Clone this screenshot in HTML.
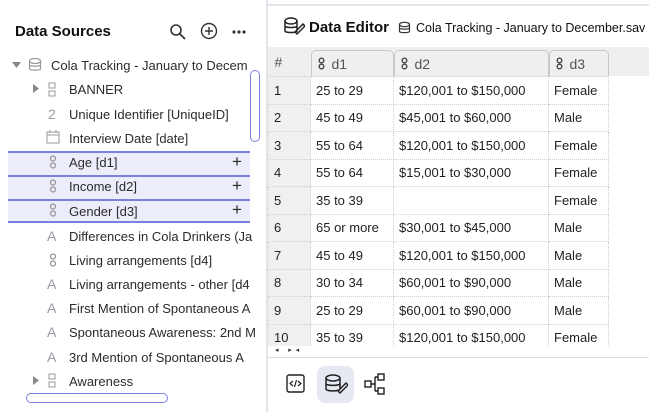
<!DOCTYPE html>
<html><head><style>
*{margin:0;padding:0;box-sizing:border-box}
html,body{background:#fff}
body{width:649px;height:412px;overflow:hidden;font-family:"Liberation Sans",sans-serif;color:#222;position:relative}
.abs{position:absolute}
.left{left:0;top:0;width:268px;height:412px;border-right:2px solid #e2e4ea;background:#fff}
.t{position:absolute;font-size:13px;white-space:nowrap;color:#2b2b2b}
.row{position:absolute;left:8px;width:242px;height:24px;background:#ecedfa;border-top:2px solid #7b7fe0}
.ic{position:absolute;color:#9a9ca4;font-size:14px}
.grid{position:absolute;left:268px;top:47px}
table{border-collapse:collapse;font-size:13px}
td{height:27.5px;padding:0 5px;border:1px dotted #cfcfcf;white-space:nowrap;color:#222}
td.n{background:#f0f0f0;width:42px}
th{height:29px;background:#efefef;font-weight:normal;text-align:left;padding:0;color:#555;font-size:14px}
th .b{height:26px;margin-top:3px;border:1.5px solid #c8c8c8;border-bottom:none;border-radius:5px 5px 0 0;padding:3px 6px;display:flex;align-items:center;gap:7px}
.dot{display:inline-block;width:7px;height:13px;vertical-align:middle}
</style></head><body>
<div class="abs" style="left:0;top:0;width:649px;height:6px;border-bottom:2px solid #e2e4ea"></div>
<div class="abs left">
<div class="t" style="left:15px;top:23px;font-size:15px;font-weight:bold;color:#111">Data Sources</div>
<svg class="abs" style="left:169px;top:23px" width="18" height="18"><circle cx="7" cy="7" r="5" fill="none" stroke="#333" stroke-width="1.6"/><line x1="11" y1="11" x2="16" y2="16" stroke="#333" stroke-width="1.8"/></svg>
<svg class="abs" style="left:200px;top:22px" width="18" height="18"><circle cx="9" cy="9" r="7.5" fill="none" stroke="#333" stroke-width="1.4"/><path d="M9 5v8M5 9h8" stroke="#333" stroke-width="1.4"/></svg>
<svg class="abs" style="left:232px;top:30px" width="14" height="4"><circle cx="2" cy="2" r="1.6" fill="#333"/><circle cx="7" cy="2" r="1.6" fill="#333"/><circle cx="12" cy="2" r="1.6" fill="#333"/></svg>
<svg class="abs" style="left:12px;top:62px" width="10" height="7"><path d="M0 0h9L4.5 6z" fill="#888"/></svg>
<svg class="abs" style="left:28px;top:57px" width="14" height="16"><ellipse cx="7" cy="4" rx="5.5" ry="2.5" fill="none" stroke="#999" stroke-width="1.2"/><path d="M1.5 4v8c0 1.5 11 1.5 11 0V4M1.5 8c0 1.5 11 1.5 11 0" fill="none" stroke="#999" stroke-width="1.2"/></svg>
<div class="t" style="left:51px;top:58px">Cola Tracking - January to Decem</div>
<svg class="abs" style="left:33px;top:84px" width="7" height="10"><path d="M0 0v9l6-4.5z" fill="#888"/></svg>
<svg class="abs" style="left:48px;top:82px" width="8" height="15"><rect x="1" y="1" width="6" height="5" fill="none" stroke="#999"/><rect x="1" y="9" width="6" height="5" fill="none" stroke="#999"/></svg>
<div class="t" style="left:69px;top:82px">BANNER</div>
<div class="ic" style="left:48px;top:106px">2</div>
<div class="t" style="left:69px;top:107px">Unique Identifier [UniqueID]</div>
<svg class="abs" style="left:46px;top:130px" width="14" height="14"><rect x="1" y="2" width="12" height="11" fill="none" stroke="#999"/><path d="M1 5h12M4 0v3M10 0v3" stroke="#999"/></svg>
<div class="t" style="left:69px;top:131px">Interview Date [date]</div>
<div class="row" style="top:151px"></div><div class="row" style="top:175px"></div><div class="row" style="top:199px;border-bottom:2px solid #7b7fe0;height:24px"></div>
<svg class="abs" style="left:49px;top:155px" width="8" height="14"><circle cx="4" cy="3.5" r="2.5" fill="none" stroke="#999" stroke-width="1.3"/><circle cx="4" cy="10.5" r="2.5" fill="none" stroke="#999" stroke-width="1.3"/></svg>
<div class="t" style="left:69px;top:155px">Age [d1]</div><div class="t" style="left:232px;top:152px;font-size:17px">+</div>
<svg class="abs" style="left:49px;top:179px" width="8" height="14"><circle cx="4" cy="3.5" r="2.5" fill="none" stroke="#999" stroke-width="1.3"/><circle cx="4" cy="10.5" r="2.5" fill="none" stroke="#999" stroke-width="1.3"/></svg>
<div class="t" style="left:69px;top:179px">Income [d2]</div><div class="t" style="left:232px;top:176px;font-size:17px">+</div>
<svg class="abs" style="left:49px;top:203px" width="8" height="14"><circle cx="4" cy="3.5" r="2.5" fill="none" stroke="#999" stroke-width="1.3"/><circle cx="4" cy="10.5" r="2.5" fill="none" stroke="#999" stroke-width="1.3"/></svg>
<div class="t" style="left:69px;top:204px">Gender [d3]</div><div class="t" style="left:232px;top:200px;font-size:17px">+</div>
<div class="ic" style="left:47px;top:228px">A</div><div class="t" style="left:69px;top:229px">Differences in Cola Drinkers (Ja</div>
<svg class="abs" style="left:49px;top:253px" width="8" height="14"><circle cx="4" cy="3.5" r="2.5" fill="none" stroke="#999" stroke-width="1.3"/><circle cx="4" cy="10.5" r="2.5" fill="none" stroke="#999" stroke-width="1.3"/></svg>
<div class="t" style="left:69px;top:253px">Living arrangements [d4]</div>
<div class="ic" style="left:47px;top:276px">A</div><div class="t" style="left:69px;top:277px">Living arrangements - other [d4</div>
<div class="ic" style="left:47px;top:300px">A</div><div class="t" style="left:69px;top:301px">First Mention of Spontaneous A</div>
<div class="ic" style="left:47px;top:324px">A</div><div class="t" style="left:69px;top:325px">Spontaneous Awareness: 2nd M</div>
<div class="ic" style="left:47px;top:349px">A</div><div class="t" style="left:69px;top:350px">3rd Mention of Spontaneous A</div>
<svg class="abs" style="left:33px;top:376px" width="7" height="10"><path d="M0 0v9l6-4.5z" fill="#888"/></svg>
<svg class="abs" style="left:48px;top:373px" width="8" height="15"><rect x="1" y="1" width="6" height="5" fill="none" stroke="#999"/><rect x="1" y="9" width="6" height="5" fill="none" stroke="#999"/></svg>
<div class="t" style="left:69px;top:374px">Awareness</div>
<div class="abs" style="left:250px;top:70px;width:10px;height:72px;border:1.5px solid #7b7fe0;border-radius:5px"></div>
<div class="abs" style="left:26px;top:393px;width:142px;height:10px;border:1.5px solid #7b7fe0;border-radius:5px"></div>
</div>
<svg class="abs" style="left:283px;top:16px" width="22" height="20"><ellipse cx="8" cy="5" rx="6" ry="3" fill="none" stroke="#222" stroke-width="1.5"/><path d="M2 5v10c0 2 12 2 12 0V5M2 10c0 2 12 2 12 0M12 16l8-8 2 2-8 8z" fill="none" stroke="#222" stroke-width="1.5"/></svg>
<div class="t" style="left:309px;top:19px;font-size:15px;font-weight:bold;color:#111">Data Editor</div>
<svg class="abs" style="left:398px;top:21px" width="13" height="14"><ellipse cx="6.5" cy="3.5" rx="5" ry="2.2" fill="none" stroke="#333" stroke-width="1.2"/><path d="M1.5 3.5v7c0 1.5 10 1.5 10 0v-7M1.5 7c0 1.5 10 1.5 10 0" fill="none" stroke="#333" stroke-width="1.2"/></svg>
<div class="t" style="left:416px;top:21px;font-size:12.5px;color:#111">Cola Tracking - January to December.sav</div>
<div class="abs" style="left:268px;top:47px;width:381px;height:29px;background:#efefef"></div>
<div class="grid"><table>
<tr><th style="width:42px;padding-left:6px">#</th>
<th style="width:83px"><div class="b"><svg class="dot"><circle cx="3.5" cy="3.5" r="2.3" fill="none" stroke="#444" stroke-width="1.4"/><circle cx="3.5" cy="9.5" r="2.3" fill="none" stroke="#444" stroke-width="1.4"/></svg>d1</div></th>
<th style="width:155px"><div class="b"><svg class="dot"><circle cx="3.5" cy="3.5" r="2.3" fill="none" stroke="#444" stroke-width="1.4"/><circle cx="3.5" cy="9.5" r="2.3" fill="none" stroke="#444" stroke-width="1.4"/></svg>d2</div></th>
<th style="width:60px"><div class="b"><svg class="dot"><circle cx="3.5" cy="3.5" r="2.3" fill="none" stroke="#444" stroke-width="1.4"/><circle cx="3.5" cy="9.5" r="2.3" fill="none" stroke="#444" stroke-width="1.4"/></svg>d3</div></th></tr>
<tr><td class="n">1</td><td>25 to 29</td><td>$120,001 to $150,000</td><td>Female</td></tr>
<tr><td class="n">2</td><td>45 to 49</td><td>$45,001 to $60,000</td><td>Male</td></tr>
<tr><td class="n">3</td><td>55 to 64</td><td>$120,001 to $150,000</td><td>Female</td></tr>
<tr><td class="n">4</td><td>55 to 64</td><td>$15,001 to $30,000</td><td>Female</td></tr>
<tr><td class="n">5</td><td>35 to 39</td><td></td><td>Female</td></tr>
<tr><td class="n">6</td><td>65 or more</td><td>$30,001 to $45,000</td><td>Male</td></tr>
<tr><td class="n">7</td><td>45 to 49</td><td>$120,001 to $150,000</td><td>Male</td></tr>
<tr><td class="n">8</td><td>30 to 34</td><td>$60,001 to $90,000</td><td>Male</td></tr>
<tr><td class="n">9</td><td>25 to 29</td><td>$60,001 to $90,000</td><td>Male</td></tr>
<tr><td class="n">10</td><td>35 to 39</td><td>$120,001 to $150,000</td><td>Female</td></tr>
</table></div>
<div class="abs" style="left:268px;top:346px;width:381px;height:12px;background:#fff"></div>
<div class="t" style="left:275px;top:346px;font-size:7px;color:#333">◂ &nbsp; &nbsp; ▸ &nbsp;◂</div>
<div class="abs" style="left:268px;top:357px;width:381px;height:55px;background:#fff;border-top:1px solid #ddd"></div>
<svg class="abs" style="left:286px;top:374px" width="19" height="19"><rect x="1" y="1" width="17" height="17" rx="2" fill="none" stroke="#222" stroke-width="1.4"/><path d="M7 7l-3 2.5 3 2.5M12 7l3 2.5-3 2.5M10.5 6l-2 7" fill="none" stroke="#222" stroke-width="1.2"/></svg>
<div class="abs" style="left:317px;top:366px;width:37px;height:37px;background:#e6e8f2;border-radius:8px"></div>
<svg class="abs" style="left:324px;top:373px" width="24" height="22"><ellipse cx="9" cy="5" rx="7" ry="3" fill="none" stroke="#222" stroke-width="1.5"/><path d="M2 5v11c0 2.5 14 2.5 14 0V5M2 10.5c0 2.5 14 2.5 14 0M14 18l8-8 2 2-8 8z" fill="none" stroke="#222" stroke-width="1.5"/></svg>
<svg class="abs" style="left:364px;top:373px" width="22" height="22"><rect x="1" y="8" width="6" height="6" fill="none" stroke="#222" stroke-width="1.4"/><rect x="14" y="1" width="6" height="6" fill="none" stroke="#222" stroke-width="1.4"/><rect x="14" y="15" width="6" height="6" fill="none" stroke="#222" stroke-width="1.4"/><path d="M7 11h4M11 4v14M11 4h3M11 18h3" fill="none" stroke="#222" stroke-width="1.4"/></svg>
</body></html>
